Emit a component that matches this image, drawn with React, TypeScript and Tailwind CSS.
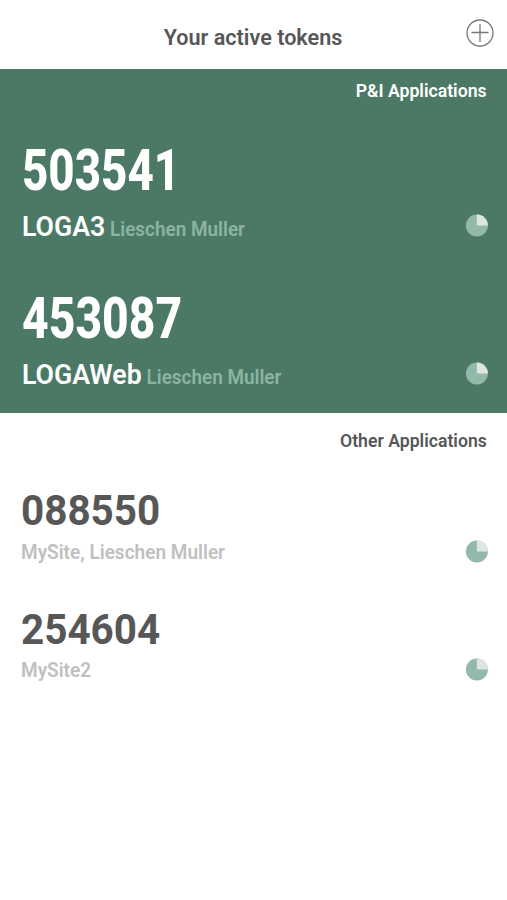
import React from 'react';

const Timer = () => (
  <svg className="mr-[19px] mb-[2px] h-[23px] w-[23px] shrink-0" viewBox="0 0 23 23">
    <circle cx="11.9" cy="11.5" r="11" fill="#92b9aa" />
    <path d="M11.9 11.5V.5a11 11 0 0 1 11 11Z" fill="#dee5e2" />
  </svg>
);

const App = () => {
  return (
    <div className="min-h-[900px] w-full bg-white font-['Roboto',sans-serif] font-semibold text-[#575757]">
      <header className="relative flex h-[69px] items-center justify-center pt-[6px]">
        <h1 className="origin-center scale-x-[0.96] text-[22.5px] whitespace-nowrap">Your active tokens</h1>
        <button className="absolute top-[19px] right-[13px]" aria-label="Add token">
          <svg className="h-[28px] w-[28px]" viewBox="0 0 28 28" fill="none" stroke="#77787a" strokeWidth="1.3">
            <circle cx="14" cy="14" r="13" />
            <path d="M14 5v18M5.5 13.5h17" />
          </svg>
        </button>
      </header>

      <section className="h-[344px] bg-[#4c7966] text-white">
        <h2 className="flex h-[44px] items-center justify-end pr-[20px] pb-[2px] text-[18px]">
          <span className="origin-right scale-x-[0.98] whitespace-nowrap">P&amp;I Applications</span>
        </h2>
        <div className="mt-[28px] pl-[21.5px]">
          <div className="origin-left scale-x-[0.795] text-[57.5px] leading-[60px] font-extrabold">503541</div>
          <div className="flex h-[50px] items-center justify-between">
            <div className="flex origin-left scale-x-[0.97] items-baseline gap-[5px] pt-px whitespace-nowrap">
              <span className="text-[27.5px]">LOGA3</span>
              <span className="text-[19.5px] text-[#8bb5a2]">Lieschen Muller</span>
            </div>
            <Timer />
          </div>
        </div>
        <div className="mt-[38px] pl-[21.5px]">
          <div className="origin-left scale-x-[0.805] text-[57.5px] leading-[60px] font-extrabold">453087</div>
          <div className="flex h-[50px] items-center justify-between">
            <div className="flex origin-left scale-x-[0.97] items-baseline gap-[5px] pt-px whitespace-nowrap">
              <span className="text-[27.5px]">LOGAWeb</span>
              <span className="text-[19.5px] text-[#8bb5a2]">Lieschen Muller</span>
            </div>
            <Timer />
          </div>
        </div>
      </section>

      <section>
        <h2 className="flex h-[55px] items-center justify-end pr-[20px] text-[18px]">
          <span className="origin-right scale-x-[0.98] whitespace-nowrap">Other Applications</span>
        </h2>
        <div className="mt-[19px] pl-[21px]">
          <div className="origin-left scale-x-[0.94] text-[43px] leading-[46px] font-bold">088550</div>
          <div className="flex h-[38px] items-center justify-between">
            <span className="origin-left scale-x-[0.975] pt-px text-[19.5px] whitespace-nowrap text-[#bfc0c0]">MySite, Lieschen Muller</span>
            <Timer />
          </div>
        </div>
        <div className="mt-[34.5px] pl-[21px]">
          <div className="origin-left scale-x-[0.94] text-[43px] leading-[46px] font-bold">254604</div>
          <div className="flex h-[38px] items-center justify-between">
            <span className="origin-left scale-x-[0.975] pt-px text-[19.5px] whitespace-nowrap text-[#bfc0c0]">MySite2</span>
            <Timer />
          </div>
        </div>
      </section>
    </div>
  );
};

export default App;
